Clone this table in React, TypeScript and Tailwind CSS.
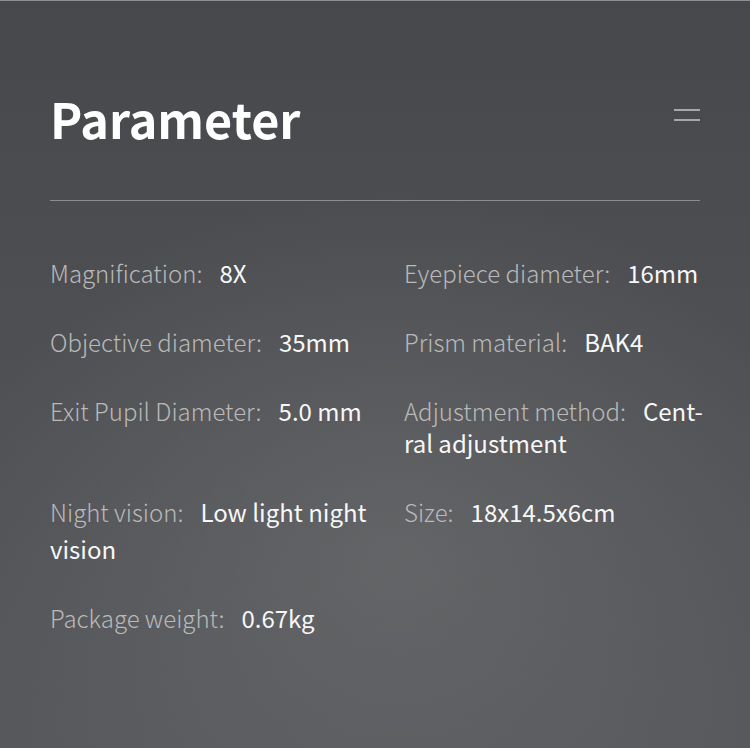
import React from "react";

const font = { fontFamily: '"Noto Sans CJK SC", "Noto Sans", sans-serif' };

function Item({ label, value, lh = "leading-[32px]", extra = "" }: { label: string; value: React.ReactNode; lh?: string; extra?: string }) {
  return (
    <div className={`whitespace-nowrap text-[24px] ${lh} ${extra}`}>
      <span className="text-[#b9b9b9] font-light">{label}</span>
      <span className="inline-block w-[17px]" />
      <span className="text-[#f7f7f7] font-normal">{value}</span>
    </div>
  );
}

export default function App() {
  return (
    <div
      style={font}
      className="w-[750px] h-[748px] overflow-hidden border-t border-[#8e8f91] bg-[radial-gradient(ellipse_60%_50%_at_53%_75%,rgba(112,114,116,0.55),rgba(112,114,116,0)),linear-gradient(to_bottom,#46484b,#56585b)] px-[50px] pt-[69px]"
    >
      <div className="flex items-start justify-between">
        <h1 className="text-[48.5px] leading-[104px] -mt-[4px] font-bold text-white">Parameter</h1>
        <div className="mt-[39px] flex flex-col gap-[8px]">
          <div className="h-[2px] w-[26px] bg-[#a8a8a8]" />
          <div className="h-[2px] w-[26px] bg-[#a8a8a8]" />
        </div>
      </div>
      <div className="mt-[30px] h-px bg-[#8c8d8f]" />
      <div className="mt-[56px] grid grid-cols-[354px_1fr] gap-y-[37px]">
        <Item label="Magnification:" value="8X" />
        <Item label="Eyepiece diameter:" value="16mm" />
        <Item label="Objective diameter:" value="35mm" />
        <Item label="Prism material:" value="BAK4" />
        <Item label="Exit Pupil Diameter:" value="5.0 mm" />
        <Item label="Adjustment method:" value={<>Cent-<br />ral adjustment</>} />
        <Item label="Night vision:" value={<>Low light night<br />vision</>} lh="leading-[37px]" extra="-mt-[3px]" />
        <Item label="Size:" value="18x14.5x6cm" lh="leading-[37px]" extra="-mt-[3px]" />
        <Item label="Package weight:" value="0.67kg" extra="-mt-[2px]" />
      </div>
    </div>
  );
}
